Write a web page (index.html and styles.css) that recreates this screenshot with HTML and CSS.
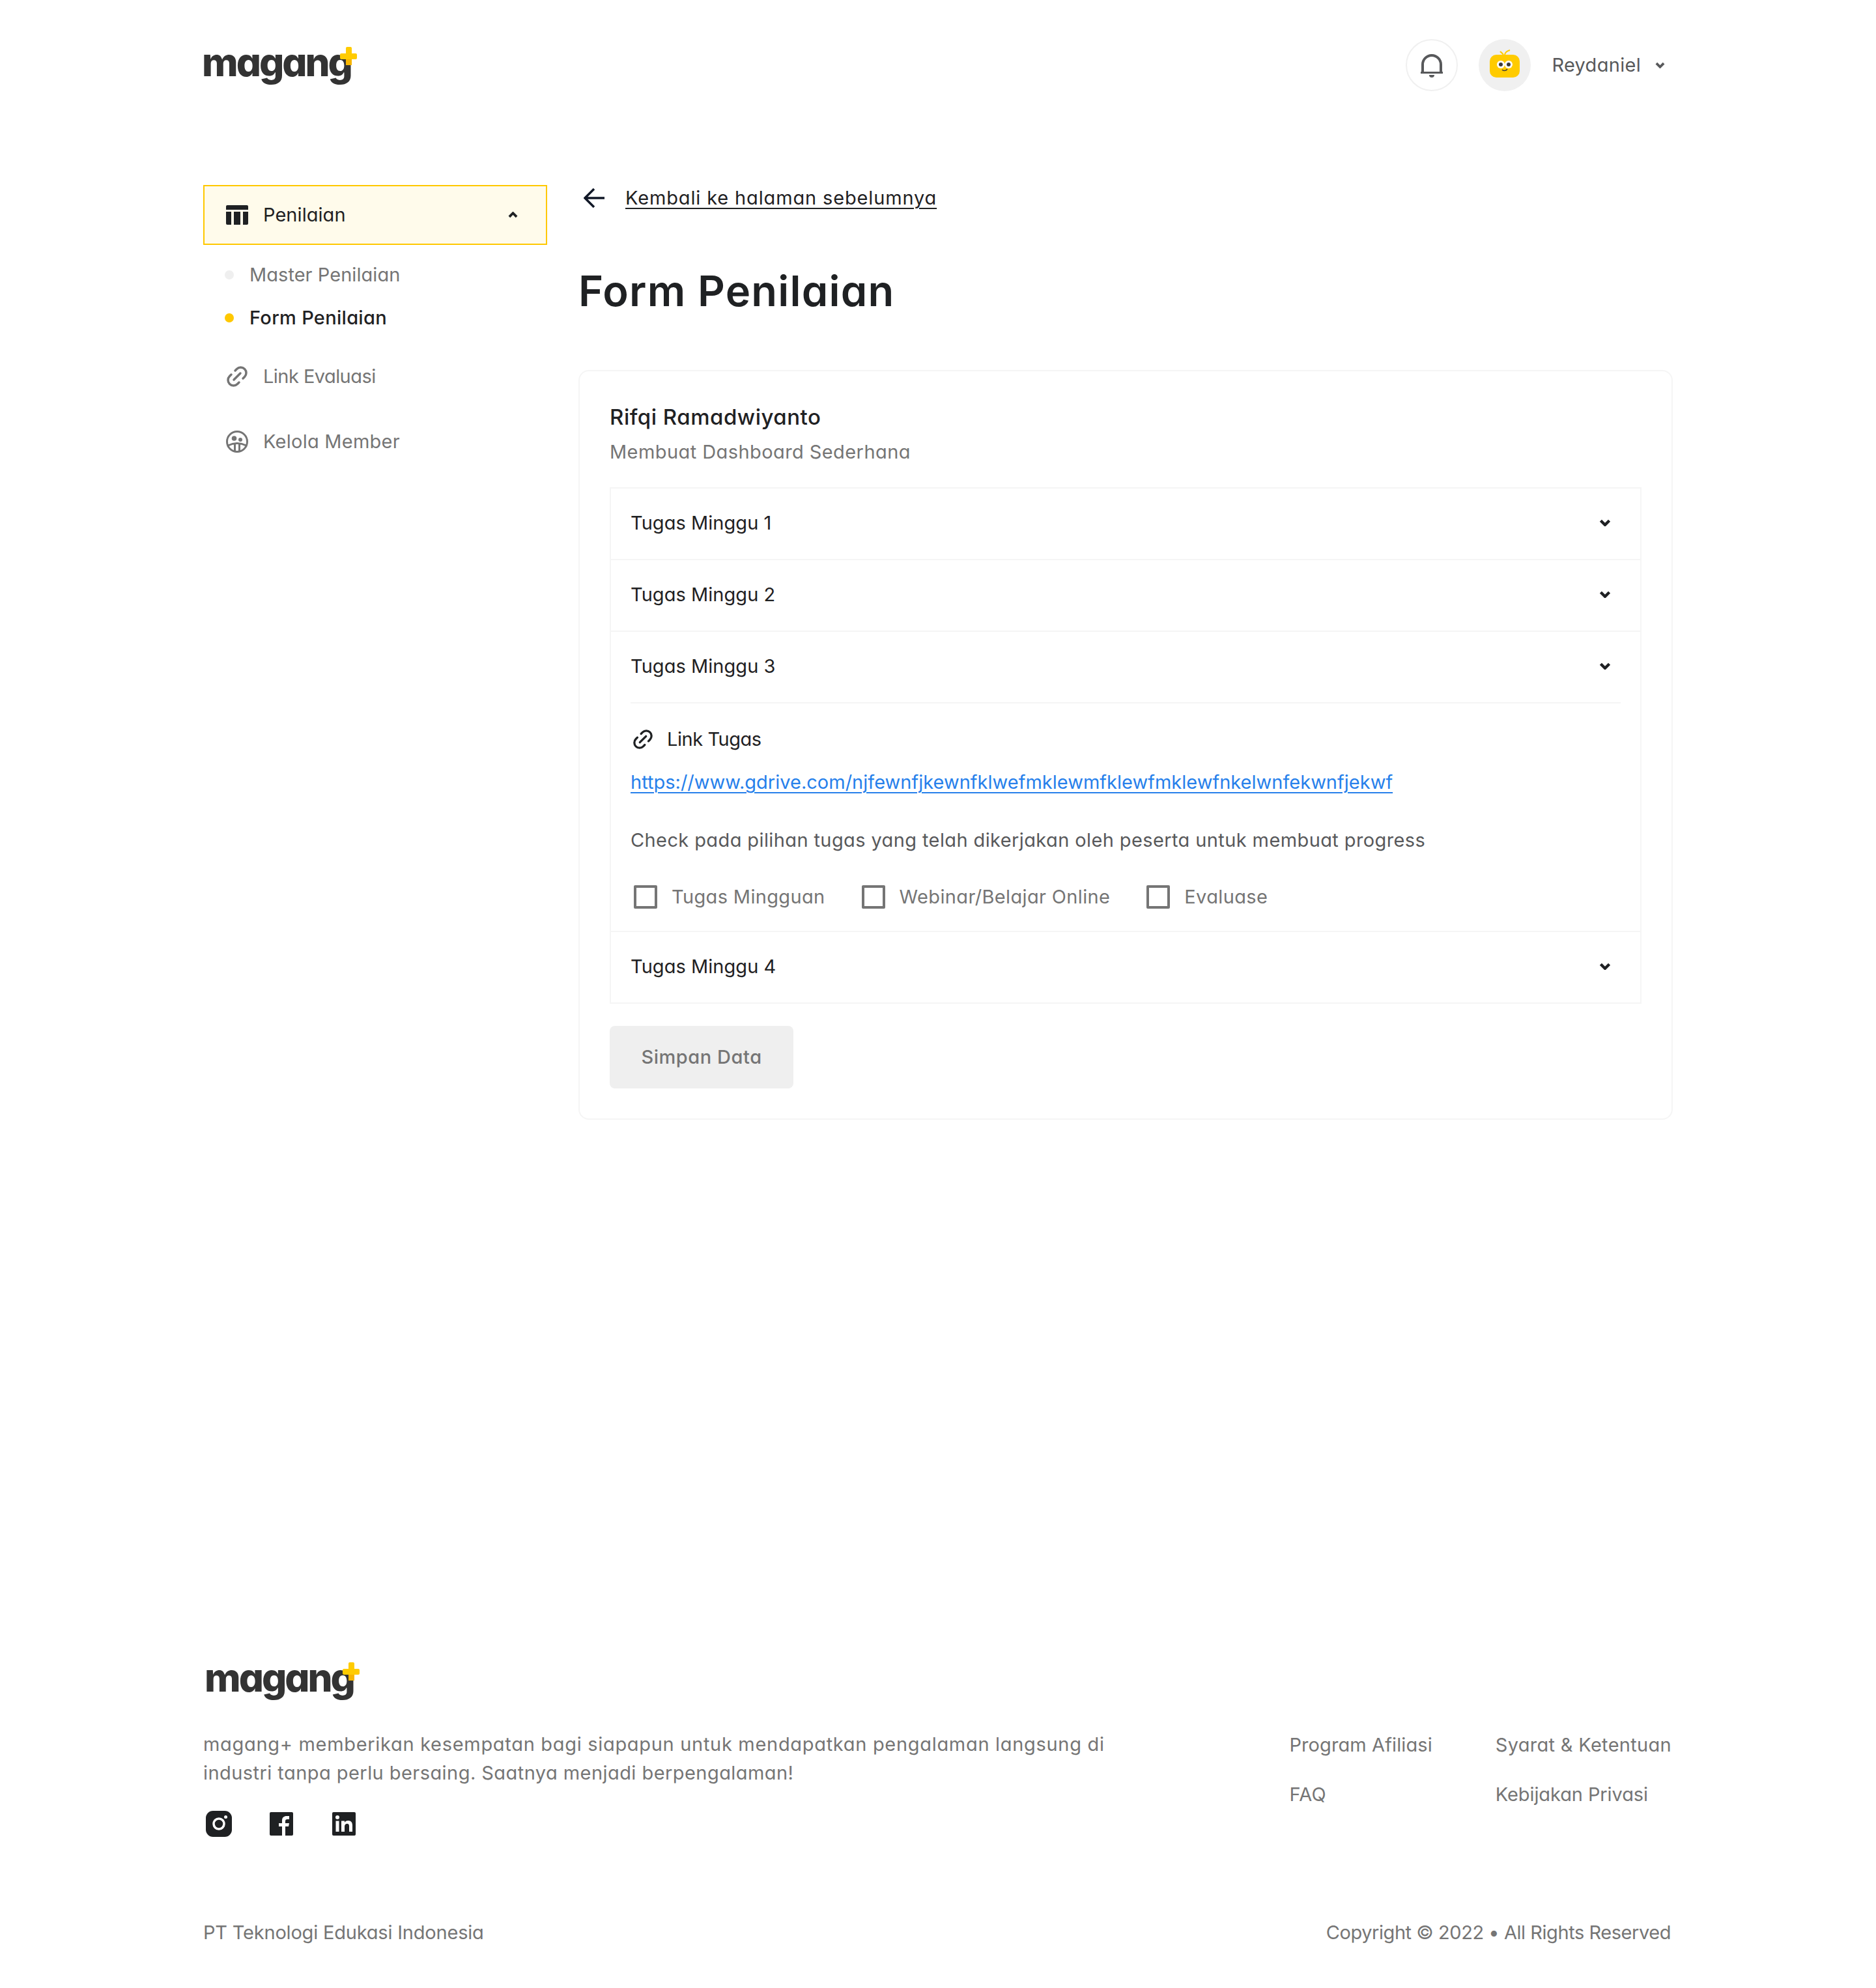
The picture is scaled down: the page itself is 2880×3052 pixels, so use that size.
FILE: index.html
```html
<!doctype html>
<html lang="en">
  <head>
    <meta charset="UTF-8" />
    <title>Form Penilaian</title>
    <link rel="stylesheet" href="styles.css">
  </head>

  <body>
    <header class="topbar">
      <a class="logo" href="#">
        <span class="logo-text">magang</span>
        <svg class="logo-plus" viewBox="0 0 26 28" width="26" height="28">
          <rect x="9" y="0" width="9" height="12" rx="2" fill="#ffcb00" />
          <rect x="9" y="17" width="9" height="11" fill="#f7b500" />
          <rect x="0" y="10" width="26" height="9" rx="2" fill="#ffcb00" />
        </svg>
      </a>
      <div class="user-area">
        <button class="round-btn bell-btn">
          <svg viewBox="0 0 40 40" width="40" height="40" fill="none" stroke="#58595b">
            <path d="M6 31V19a14 14 0 0 1 28 0V31" stroke-width="4" />
            <path d="M3 31.5H37" stroke-width="3" />
            <path d="M16 35a4 4 0 0 0 8 0z" fill="#58595b" stroke="none" />
          </svg>
        </button>
        <span class="round-btn avatar">
          <svg viewBox="0 0 46 44" width="46" height="44">
            <path d="M21 9C19 6 17 5 16 4M23 9C24 5 27 3 31 2" fill="none" stroke="#ffcb00" stroke-width="2" />
            <rect x="0" y="9" width="46" height="35" rx="10" fill="#ffcb00" />
            <circle cx="17" cy="24" r="6" fill="#fff" />
            <circle cx="29" cy="24" r="6" fill="#fff" />
            <circle cx="17" cy="24" r="3" fill="#3a3a3a" />
            <circle cx="29" cy="24" r="3" fill="#3a3a3a" />
            <path d="M19 32c2 2 6 2 8-1" fill="none" stroke="#3a3a3a" stroke-width="1.5" />
          </svg>
        </span>
        <span class="user-name">Reydaniel</span>
        <svg class="chevron user-chevron" viewBox="0 0 16 10" width="15" height="10">
          <path d="M2 2l6 6 6-6" />
        </svg>
      </div>
    </header>

    <div class="layout">
      <nav class="sidebar">
        <div class="nav-active">
          <svg viewBox="0 0 34 30" width="34" height="30" fill="#1f2123">
            <path d="M2 0H32a2 2 0 0 1 2 2V7H0V2a2 2 0 0 1 2-2z" />
            <path d="M0 10H8V30H2a2 2 0 0 1-2-2z" />
            <rect x="12" y="10" width="10" height="20" />
            <path d="M26 10H34V28a2 2 0 0 1-2 2H26z" />
          </svg>
          <span class="nav-label">Penilaian</span>
          <svg class="chevron nav-chevron" viewBox="0 0 16 10" width="15" height="10">
            <path d="M2 8l6-6 6 6" />
          </svg>
        </div>
        <ul class="subnav">
          <li class="subnav-item"><span class="dot"></span>Master Penilaian</li>
          <li class="subnav-item current"><span class="dot"></span>Form Penilaian</li>
        </ul>
        <div class="nav-item">
          <svg class="link-icon" viewBox="0 0 34 34" width="34" height="34">
            <path d="M12 22l10-10M14 8l2.500-2.500a8 8 0 0 1 12 12l-2.500 2.500M20 26l-2.500 2.500a8 8 0 0 1-12-12L8 14" />
          </svg>
          <span class="nav-tight">Link Evaluasi</span>
        </div>
        <div class="nav-item">
          <svg viewBox="0 0 34 34" width="34" height="34" fill="none" stroke="#757575" stroke-width="3">
            <circle cx="17" cy="17" r="15.500" />
            <circle cx="12.500" cy="12" r="3.800" fill="#757575" stroke="none" />
            <circle cx="22" cy="14" r="3" fill="#757575" stroke="none" />
            <path d="M3 23Q17 16 31 23M13.500 20V32M20.500 20V32" />
          </svg>
          <span class="nav-wide">Kelola Member</span>
        </div>
      </nav>

      <main class="content">
        <div class="back-row">
          <svg viewBox="0 0 32 32" width="32" height="32" fill="none" stroke="#111827" stroke-width="3.500">
            <path d="M32 16H2M16 2L2 16l14 14" />
          </svg>
          <a class="back-link" href="#">Kembali ke halaman sebelumnya</a>
        </div>
        <h1 class="page-title">Form Penilaian</h1>

        <section class="card">
          <h2 class="person-name">Rifqi Ramadwiyanto</h2>
          <p class="person-task">Membuat Dashboard Sederhana</p>

          <div class="accordion">
            <div class="acc-row">
              <span>Tugas Minggu 1</span>
              <svg class="chevron" viewBox="0 0 16 10" width="18" height="11"><path d="M2 2l6 6 6-6" /></svg>
            </div>
            <div class="acc-row">
              <span>Tugas Minggu 2</span>
              <svg class="chevron" viewBox="0 0 16 10" width="18" height="11"><path d="M2 2l6 6 6-6" /></svg>
            </div>
            <div class="acc-open">
              <div class="acc-row acc-row-inner">
                <span>Tugas Minggu 3</span>
                <svg class="chevron" viewBox="0 0 16 10" width="18" height="11"><path d="M2 2l6 6 6-6" /></svg>
              </div>
              <div class="acc-body">
                <div class="link-title">
                  <svg class="link-icon dark" viewBox="0 0 34 34" width="32" height="32">
                    <path d="M12 22l10-10M14 8l2.500-2.500a8 8 0 0 1 12 12l-2.500 2.500M20 26l-2.500 2.500a8 8 0 0 1-12-12L8 14" />
                  </svg>
                  <span>Link Tugas</span>
                </div>
                <a class="task-url" href="#">https://www.gdrive.com/njfewnfjkewnfklwefmklewmfklewfmklewfnkelwnfekwnfjekwf</a>
                <p class="check-note">Check pada pilihan tugas yang telah dikerjakan oleh peserta untuk membuat progress</p>
                <div class="check-row">
                  <label class="check-item"><input type="checkbox" />Tugas Mingguan</label>
                  <label class="check-item"><input type="checkbox" />Webinar/Belajar Online</label>
                  <label class="check-item"><input type="checkbox" />Evaluase</label>
                </div>
              </div>
            </div>
            <div class="acc-row">
              <span>Tugas Minggu 4</span>
              <svg class="chevron" viewBox="0 0 16 10" width="18" height="11"><path d="M2 2l6 6 6-6" /></svg>
            </div>
          </div>

          <button class="save-btn">Simpan Data</button>
        </section>
      </main>
    </div>

    <footer class="footer">
      <div class="footer-top">
        <div class="footer-about">
          <a class="logo footer-logo" href="#">
            <span class="logo-text">magang</span>
            <svg class="logo-plus" viewBox="0 0 26 28" width="26" height="28">
              <rect x="9" y="0" width="9" height="12" rx="2" fill="#ffcb00" />
              <rect x="9" y="17" width="9" height="11" fill="#f7b500" />
              <rect x="0" y="10" width="26" height="9" rx="2" fill="#ffcb00" />
            </svg>
          </a>
          <p class="footer-text">magang+ memberikan kesempatan bagi siapapun untuk mendapatkan pengalaman langsung di<br /><span class="footer-line">industri tanpa perlu bersaing. Saatnya menjadi berpengalaman!</span></p>
          <div class="socials">
            <svg viewBox="0 0 40 40" width="40" height="40">
              <rect width="40" height="40" rx="11" fill="#1f2123" />
              <circle cx="20" cy="20" r="8" fill="none" stroke="#fff" stroke-width="3.500" />
              <circle cx="30.500" cy="9.500" r="2.500" fill="#fff" />
            </svg>
            <svg viewBox="0 0 36 36" width="36" height="36">
              <rect width="36" height="36" rx="2" fill="#1f2123" />
              <path d="M19 36V22h-5v-5h5v-4c0-5 3-7 7-7h4v5h-3c-2 0-3 1-3 3v3h6l-1 5h-5v14z" fill="#fff" />
            </svg>
            <svg viewBox="0 0 36 36" width="36" height="36">
              <rect width="36" height="36" rx="2" fill="#1f2123" />
              <circle cx="8" cy="8" r="3" fill="#fff" />
              <path d="M5.500 13.500h5V30h-5zM14 13.500h5v2.300c1-1.600 3-2.800 5.500-2.800 4.500 0 6.500 2.800 6.500 7.500V30h-5v-8.500c0-2.500-1-3.800-3-3.800s-4 1.300-4 4V30h-5z" fill="#fff" />
            </svg>
          </div>
        </div>
        <div class="footer-links">
          <a class="link-mid" href="#">Program Afiliasi</a>
          <a href="#">Syarat &amp; Ketentuan</a>
          <a href="#">FAQ</a>
          <a class="link-tight" href="#">Kebijakan Privasi</a>
        </div>
      </div>
      <div class="footer-bottom">
        <span class="company">PT Teknologi Edukasi Indonesia</span>
        <span class="copyright">Copyright © 2022 • All Rights Reserved</span>
      </div>
    </footer>
  </body>
</html>
```

FILE: styles.css
```css
* {
  box-sizing: border-box;
}

html {
  background: #fff;
}

body {
  margin: 0;
  width: 2880px;
  min-height: 3052px;
  padding: 0 312px;
  display: flex;
  flex-direction: column;
  font-family: Inter, "Noto Sans", sans-serif;
  font-feature-settings: "cv11" 1;
  font-size: 29px;
  line-height: 44px;
  letter-spacing: 0.05px;
  color: #1f2123;
}

a {
  color: inherit;
  text-decoration: none;
}

p,
h1,
h2,
ul {
  margin: 0;
  padding: 0;
}

.chevron {
  fill: none;
  stroke: #1f2123;
  stroke-width: 4;
  flex: none;
}

/* header */
.topbar {
  display: flex;
  justify-content: space-between;
  align-items: center;
  padding-top: 60px;
  height: 140px;
}

.logo {
  position: relative;
  display: block;
  width: 236px;
  height: 56px;
}

.logo-text {
  display: block;
  font-size: 60px;
  font-weight: 800;
  line-height: 46px;
  letter-spacing: -3px;
  color: #333;
  margin-left: -2px;
}

.logo-plus {
  position: absolute;
  top: 0;
  right: 0;
}

.user-area {
  display: flex;
  align-items: center;
  color: #58595b;
}

.round-btn {
  width: 80px;
  height: 80px;
  border-radius: 50%;
  display: flex;
  align-items: center;
  justify-content: center;
  padding: 0;
  background: #fff;
}

.bell-btn {
  border: 2px solid #f0f0f0;
  margin-right: 32px;
}

.avatar {
  background: #f0f0f0;
  margin-right: 32px;
}

.avatar svg {
  margin-top: -6px;
}

.user-name {
  margin-right: 22px;
  letter-spacing: 0.3px;
}

.user-chevron {
  stroke: #58595b;
  margin-right: 12px;
}

/* page columns */
.layout {
  display: grid;
  grid-template-columns: 528px 1680px;
  column-gap: 48px;
  padding-top: 144px;
}

.nav-active {
  height: 92px;
  border: 2px solid #ffc800;
  background: #fffbeb;
  display: flex;
  align-items: center;
  padding: 0 33px;
}

.nav-label {
  margin-left: 23px;
}

.nav-chevron {
  margin-left: auto;
  margin-right: 10px;
}

.subnav {
  list-style: none;
  margin-top: 13px;
  margin-bottom: 7px;
}

.subnav-item {
  height: 66px;
  display: flex;
  align-items: center;
  color: #757575;
  padding-left: 33px;
}

.subnav-item.current {
  color: #1f2123;
  font-weight: 500;
  letter-spacing: 0.3px;
}

.dot {
  width: 14px;
  height: 14px;
  border-radius: 50%;
  background: #efefef;
  margin-right: 24px;
}

.current .dot {
  background: #ffc800;
}

.nav-item {
  height: 100px;
  display: flex;
  align-items: center;
  gap: 23px;
  padding-left: 35px;
  color: #757575;
}

.nav-tight {
  letter-spacing: -0.55px;
}

.nav-wide {
  letter-spacing: 0.25px;
}

.link-icon {
  fill: none;
  stroke: #757575;
  stroke-width: 3.5;
  stroke-linecap: round;
}

.link-icon.dark {
  stroke: #1f2123;
}

/* main column */
.back-row {
  display: flex;
  align-items: center;
  height: 40px;
  padding-left: 8px;
  gap: 32px;
}

.back-link {
  letter-spacing: 0.85px;
  text-decoration: underline;
  text-underline-offset: 5px;
  text-decoration-thickness: 2px;
}

.page-title {
  font-size: 65px;
  font-weight: 600;
  line-height: 96px;
  letter-spacing: 1.2px;
  margin: 75px 0 73px;
}

.card {
  border: 2px solid #f5f5f5;
  border-radius: 16px;
  padding: 48px 46px 46px;
}

.person-name {
  font-size: 33px;
  font-weight: 500;
  line-height: 44px;
  letter-spacing: 0.5px;
}

.person-task {
  color: #757575;
  margin-top: 10px;
  letter-spacing: 0.42px;
}

.accordion {
  margin-top: 32px;
  border: 2px solid #f5f5f5;
  border-bottom: 0;
}

.acc-row {
  height: 110px;
  display: flex;
  align-items: center;
  justify-content: space-between;
  padding: 0 45px 3px 30px;
  border-bottom: 2px solid #f5f5f5;
}

.acc-open {
  border-bottom: 2px solid #f5f5f5;
}

.acc-row-inner {
  margin: 0 30px;
  padding: 0 15px 3px 0;
}

.acc-body {
  padding: 32px 30px 30px;
}

.link-title {
  display: flex;
  align-items: center;
  gap: 21px;
  height: 46px;
  padding-left: 3px;
  letter-spacing: -0.45px;
}

.task-url {
  display: block;
  margin-top: 21px;
  color: #2680eb;
  letter-spacing: 0.01px;
  text-decoration: underline;
  text-underline-offset: 5px;
  text-decoration-thickness: 2px;
}

.check-note {
  margin-top: 45px;
  color: #58595b;
  letter-spacing: 0.39px;
}

.check-row {
  display: flex;
  gap: 51px;
  margin-top: 43px;
  color: #757575;
  letter-spacing: 0.35px;
}

.check-item {
  display: flex;
  align-items: center;
  gap: 22px;
  padding-left: 5px;
}

.check-item input {
  appearance: none;
  width: 36px;
  height: 36px;
  margin: 0;
  border: 4px solid #757575;
  border-radius: 2px;
  background: #fff;
}

.save-btn {
  display: block;
  width: 282px;
  height: 96px;
  margin-top: 34px;
  border: 0;
  border-radius: 8px;
  background: #efefef;
  color: #757575;
  font: inherit;
  font-weight: 500;
  letter-spacing: 0.55px;
}

/* footer */
.footer {
  margin-top: auto;
  padding-bottom: 63px;
  color: #757575;
}

.footer-top {
  display: flex;
  justify-content: space-between;
}

.footer-logo {
  margin-left: 4px;
}

.footer-text {
  margin-top: 48px;
  letter-spacing: 0.69px;
}

.footer-line {
  letter-spacing: 0.44px;
}

.socials {
  display: flex;
  align-items: center;
  gap: 58px;
  margin-top: 36px;
  padding-left: 4px;
}

.socials svg:last-child {
  margin-left: 2px;
}

.footer-links {
  display: grid;
  grid-template-columns: auto auto;
  grid-auto-rows: 44px;
  column-gap: 97px;
  row-gap: 32px;
  align-content: start;
  margin-top: 105px;
  padding-right: 2px;
  letter-spacing: 0.3px;
}

.link-mid {
  letter-spacing: 0.1px;
}

.link-tight {
  letter-spacing: -0.1px;
}

.footer-bottom {
  display: flex;
  justify-content: space-between;
  margin-top: 125px;
}

.company {
  letter-spacing: -0.2px;
}

.copyright {
  letter-spacing: -0.45px;
  padding-right: 3px;
}
```
